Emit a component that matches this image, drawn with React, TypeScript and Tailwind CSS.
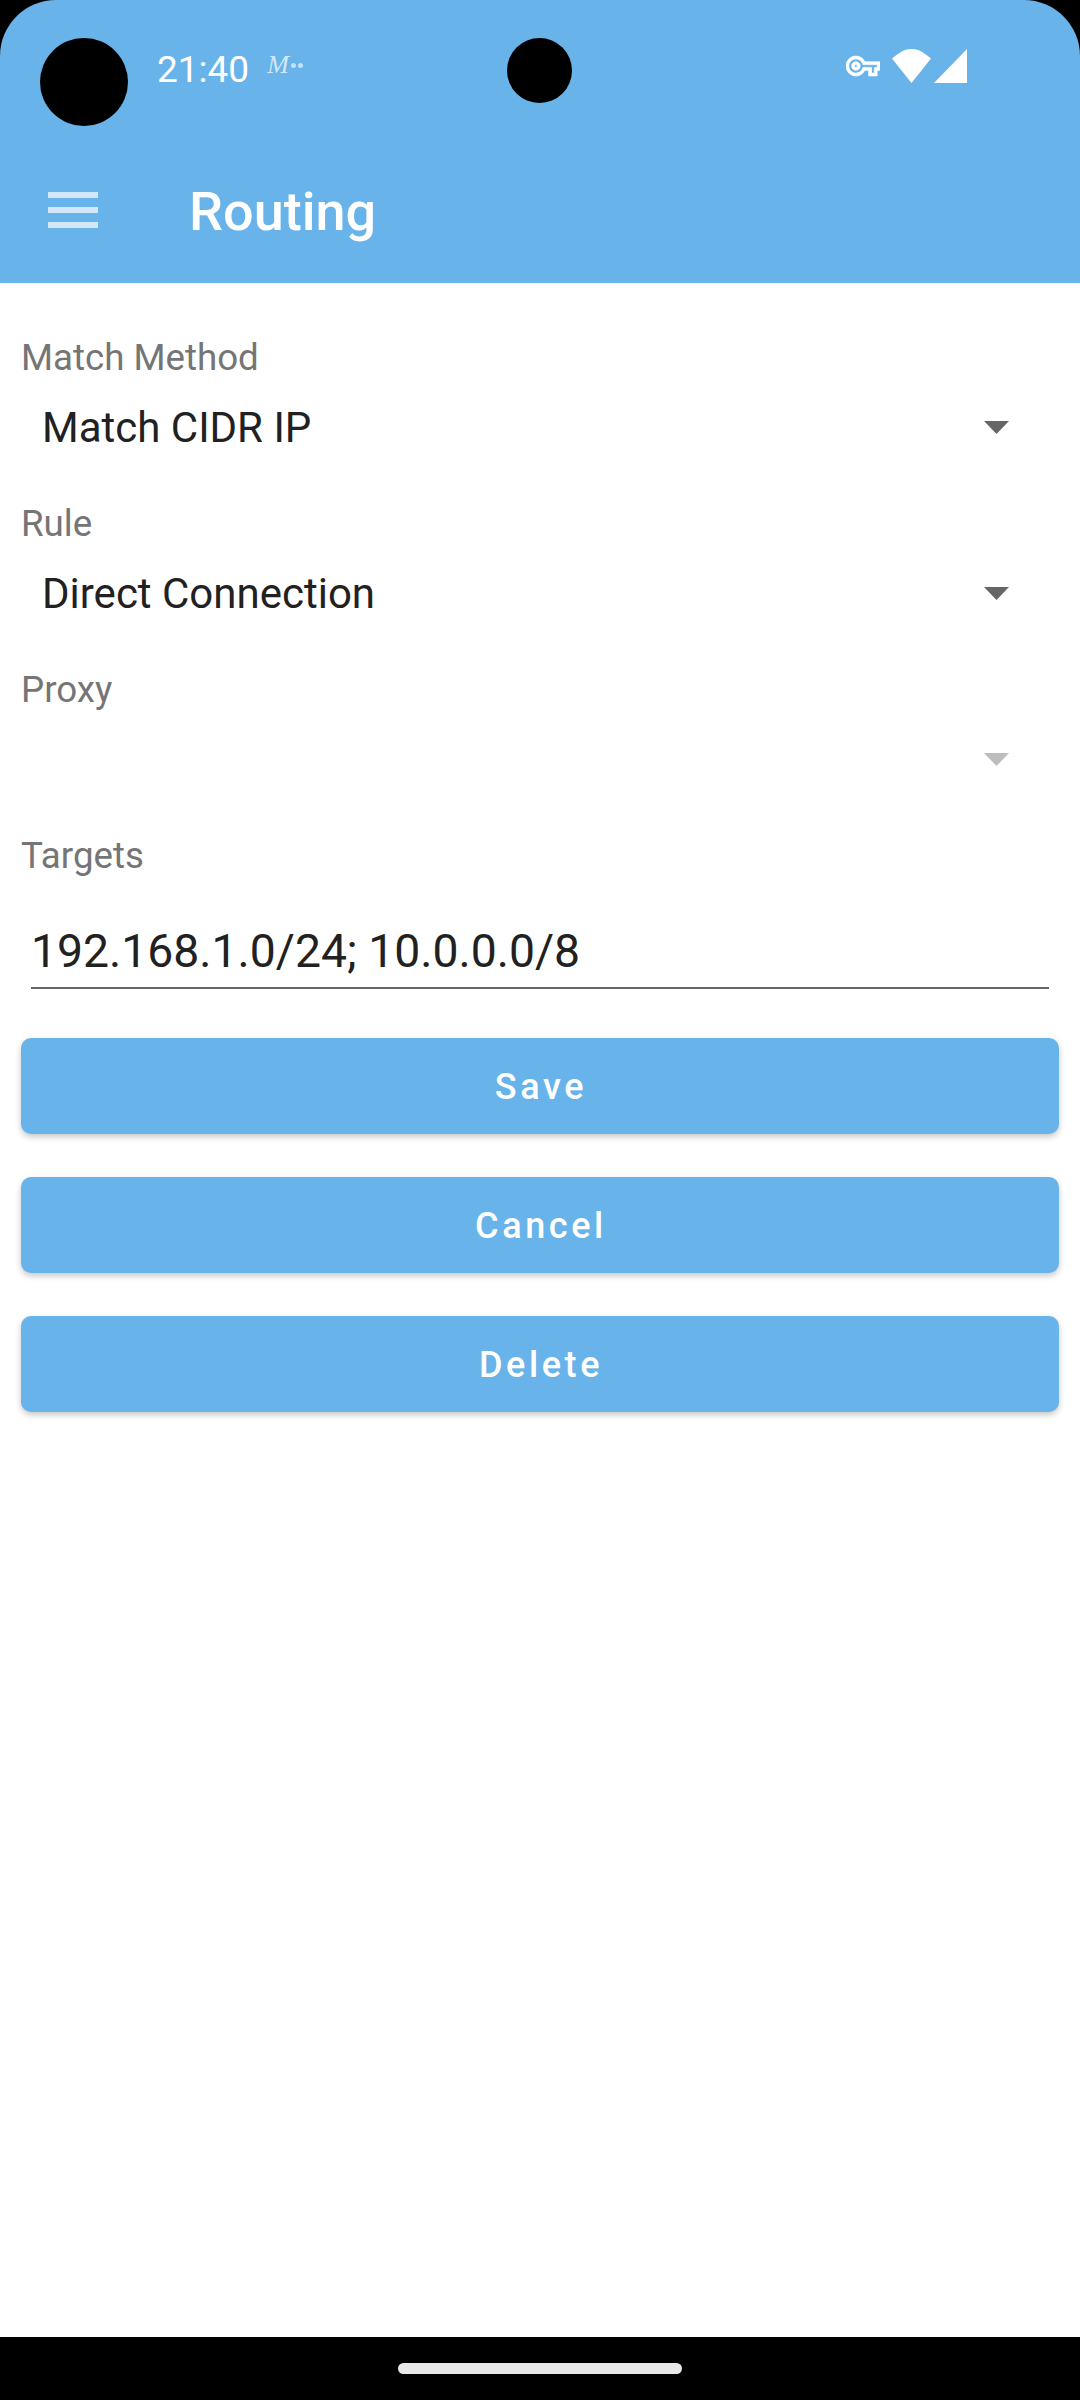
// Routing screen: Android style settings form with three dropdowns, a text field and actions.

const selects = [
  { label: "Match Method", value: "Match CIDR IP", disabled: false },
  { label: "Rule", value: "Direct Connection", disabled: false },
  { label: "Proxy", value: "", disabled: true },
];

const actions = ["Save", "Cancel", "Delete"];

function StatusBar() {
  return (
    <div className="h-[148px] flex items-start pt-[48px] pl-[157px] text-white">
      <span className="text-[37px] leading-[44px]">21:40</span>
      {/* Notification glyph */}
      <span className="ml-[18px] flex items-center gap-[2px] text-white/70">
        <span className="font-['Liberation_Serif',serif] italic text-[26px] leading-[34px]">M</span>
        <span className="w-[5px] h-[5px] rounded-full bg-white/60" />
        <span className="w-[5px] h-[5px] rounded-full bg-white/60" />
      </span>

      <div className="ml-auto mr-[113px] flex items-center">
        <svg viewBox="0 0 24 24" className="w-[34px] h-[34px] mt-[1px]" fill="white" stroke="white" strokeWidth="0.5">
          <path d="M22 19h-6v-4h-2.68c-1.14 2.42-3.6 4-6.32 4-3.86 0-7-3.14-7-7s3.14-7 7-7c2.72 0 5.17 1.58 6.32 4H24v6h-2v4zm-4-2h2v-4h2v-2H11.94l-.23-.67C11.01 8.34 9.11 7 7 7c-2.76 0-5 2.24-5 5s2.24 5 5 5c2.11 0 4.01-1.34 4.71-3.33l.23-.67H18v4zM7 15c-1.65 0-3-1.35-3-3s1.35-3 3-3 3 1.35 3 3-1.35 3-3 3zm0-4c-.55 0-1 .45-1 1s.45 1 1 1 1-.45 1-1-.45-1-1-1z" />
        </svg>
        <svg viewBox="0 0 39 34" className="w-[39px] h-[34px] ml-[12px]" fill="white">
          <path d="M19.5 34 0 9.5Q2 7.5 6 5Q12 0 19.5 0T33 5Q37 7.5 39 9.5Z" />
        </svg>
        <svg viewBox="0 0 33 34" className="w-[33px] h-[34px] ml-[3px]" fill="white">
          <path d="M33 0V34H0Z" />
        </svg>
      </div>
    </div>
  );
}

function Toolbar() {
  return (
    <div className="h-[135px] flex items-center pl-[48px] pb-[12px]">
      <div className="w-[50px] flex flex-col gap-[9px]">
        <div className="h-[6px] bg-white/70" />
        <div className="h-[6px] bg-white/70" />
        <div className="h-[6px] bg-white/70" />
      </div>
      <h1 className="ml-[91px] mt-[5px] text-[54px] leading-[60px] font-medium text-white">Routing</h1>
    </div>
  );
}

function Caret({ disabled }: { disabled: boolean }) {
  return (
    <svg
      viewBox="0 0 25 13"
      className={`w-[25px] h-[13px] ${disabled ? "text-[#bdbdbd]" : "text-[#666666]"}`}
      fill="currentColor"
    >
      <path d="M0 0H25L12.5 13Z" />
    </svg>
  );
}

function SelectField({ label, value, disabled }: { label: string; value: string; disabled: boolean }) {
  return (
    <div className="h-[166px]">
      <div className="h-[60px] pl-[21px] pt-[3px] flex items-center text-[36.7px] text-[#757575]">{label}</div>
      <div className="h-[82px] pl-[42px] pr-[71px] flex items-center justify-between">
        <span className="mt-[2px] text-[42px] leading-[52px] text-[#212121]">{value}</span>
        <Caret disabled={disabled} />
      </div>
    </div>
  );
}

export default function App() {
  return (
    <div className="relative w-[1080px] h-[2400px] flex flex-col bg-black font-['Roboto',sans-serif]">
      <header className="bg-[#68b3e9] rounded-t-[56px]">
        <StatusBar />
        <Toolbar />
      </header>

      <main className="flex-1 bg-white pt-[43px]">
        {selects.map((s) => (
          <SelectField key={s.label} {...s} />
        ))}

        <div className="h-[60px] pl-[21px] pt-[3px] flex items-center text-[36.7px] text-[#757575]">Targets</div>
        <div className="mx-[31px] h-[105px] border-b-2 border-[#666666] flex items-end pb-[10px]">
          <span className="text-[46.3px] leading-[52px] text-[#212121]">192.168.1.0/24; 10.0.0.0/8</span>
        </div>

        <div className="mt-[49px] mx-[21px] flex flex-col gap-[43px]">
          {actions.map((a) => (
            <button
              key={a}
              className="h-[96px] pl-[2px] pt-[2px] rounded-[10px] bg-[#68b3e9] text-white text-[36px] font-medium tracking-[0.1em] shadow-[0_3px_6px_rgba(0,0,0,0.22)]"
            >
              {a}
            </button>
          ))}
        </div>
      </main>

      {/* Gesture nav bar */}
      <div className="h-[63px] flex justify-center pt-[26px]">
        <div className="w-[284px] h-[11px] rounded-full bg-[#e8e8e8]" />
      </div>

      {/* Camera cut-outs sit over the status bar */}
      <div className="absolute left-[40px] top-[38px] w-[88px] h-[88px] rounded-full bg-black" />
      <div className="absolute left-[507px] top-[38px] w-[65px] h-[65px] rounded-full bg-black" />
    </div>
  );
}
